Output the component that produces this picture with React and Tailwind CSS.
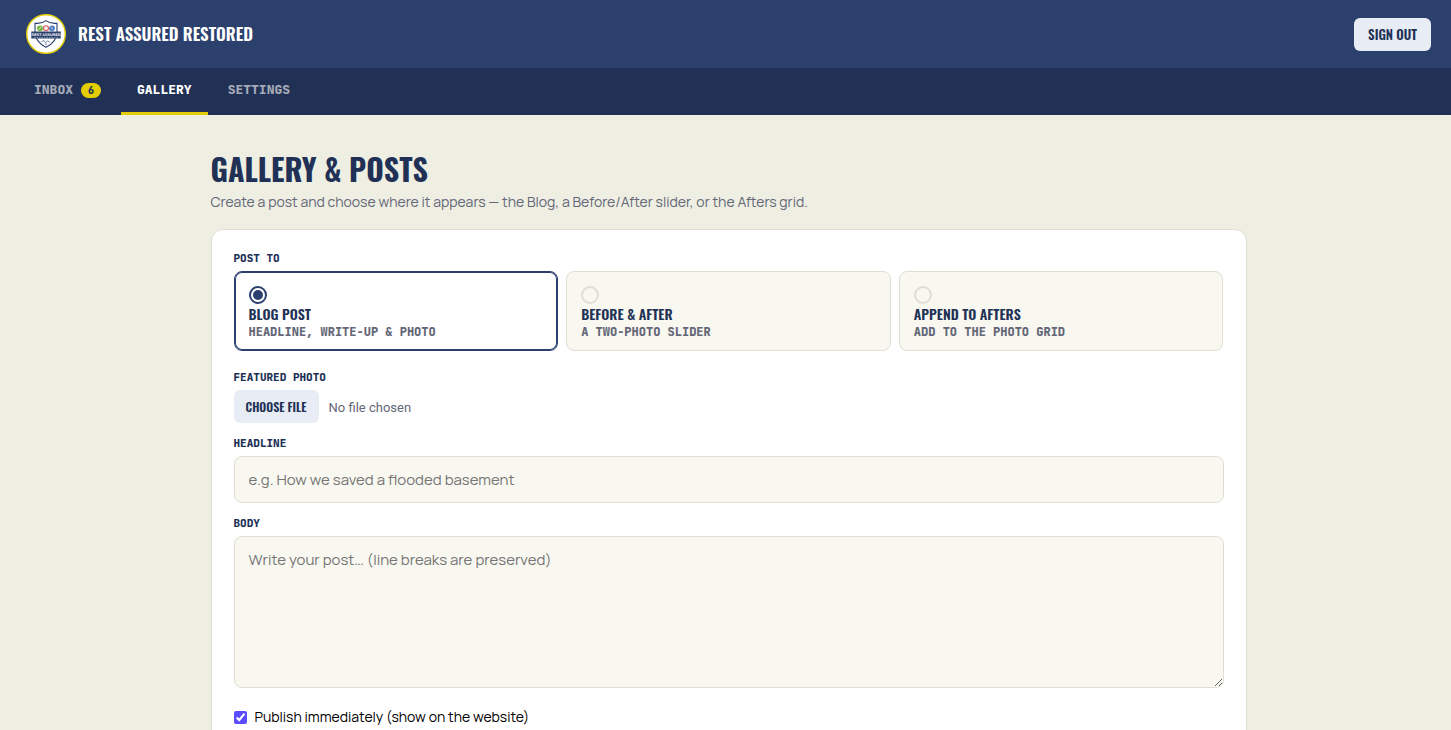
import { useState } from "react";

const TABS = [
    { id: "inbox", label: "Inbox", count: 6 },
    { id: "gallery", label: "Gallery" },
    { id: "settings", label: "Settings" },
];

const DESTINATIONS = [
    { id: "blog", title: "Blog Post", hint: "Headline, write-up & photo" },
    { id: "slider", title: "Before & After", hint: "A two-photo slider" },
    { id: "afters", title: "Append to Afters", hint: "Add to the photo grid" },
];

const DISPLAY = "font-['Oswald','Liberation_Sans_Narrow','Liberation_Sans',sans-serif]";
const MONO = "font-['JetBrains_Mono','DejaVu_Sans_Mono',monospace]";
const LABEL = `${MONO} block text-[11px] leading-[13px] font-extrabold uppercase text-[#213156]`;
const FIELD = "block w-full rounded-lg border border-[#deded2] bg-[#f9f8f0] px-3.5 py-[11px] text-[15px] leading-[23px] text-[#213156] placeholder:text-[#757575]";

/** Round shield badge shown next to the brand name */
function Logo() {
    return (
        <svg className="h-10 w-10 shrink-0" viewBox="0 0 40 40" aria-hidden="true">
            <circle cx="20" cy="20" r="19.3" fill="#fff" stroke="#e3cd00" strokeWidth="1.4" />
            <path
                d="M20 6.6c3.2 2.4 6.8 3.2 11 2.6v8.3c0 8.2-4.7 12.7-11 15.8-6.3-3.1-11-7.6-11-15.8V9.2c4.2.6 7.8-.2 11-2.6z"
                fill="#fff"
                stroke="#2c406e"
                strokeWidth="1.1"
            />
            <circle cx="14" cy="14.3" r="2.9" fill="#72b53c" />
            <circle cx="20" cy="14.3" r="2.5" fill="#fbe3e3" stroke="#d65a62" strokeWidth="1.1" />
            <circle cx="26" cy="14.3" r="2.9" fill="#4e7bbd" />
            <path d="M12.6 15.7l2.8-2.8M24.7 13l2.6 2.6M18.8 14.3h2.4" stroke="#fff" strokeWidth=".8" />
            <path d="M5.3 17.5h29.4v7H5.3z" fill="#2c406e" />
            <text
                x="20"
                y="22"
                textAnchor="middle"
                fontSize="3.7"
                fontWeight="700"
                fill="#fff"
                fontFamily="'Liberation Sans', sans-serif"
                textRendering="geometricPrecision"
            >
                REST ASSURED
            </text>
            <path d="M8 23.6h24" stroke="#a9b6d0" strokeWidth=".7" strokeDasharray="1.5 1" />
            <path d="M15.5 27.8l2.5-1.3 1.5 2.3 2-2 2.3 1.5M20 29v2" fill="none" stroke="#6c7ea5" strokeWidth=".9" />
        </svg>
    );
}

function DestinationCard({ option, checked, onSelect }) {
    return (
        <label
            className={`block cursor-pointer rounded-lg border px-3.5 pt-3.5 pb-2.5 ${checked
                ? "border-[#2c406e] bg-white shadow-[inset_0_0_0_1px_#2c406e]"
                : "border-[#deded2] bg-[#f9f8f0]"
                }`}
        >
            <input
                type="radio"
                name="destination"
                value={option.id}
                checked={checked}
                onChange={() => onSelect(option.id)}
                className="block h-[18px] w-[18px] appearance-none rounded-full border-2 border-[#deded2] bg-clip-content p-0.5
                         checked:border-[#2c406e] checked:bg-[#2c406e]"
            />
            <span className={`${DISPLAY} block text-sm leading-5 font-semibold uppercase text-[#213156]`}>
                {option.title}
            </span>
            <span className={`${MONO} block text-xs leading-4 font-extrabold uppercase text-[#646777]`}>
                {option.hint}
            </span>
        </label>
    );
}

export default function App() {
    const [tab, setTab] = useState("gallery");
    const [destination, setDestination] = useState("blog");
    const [published, setPublished] = useState(true);

    return (
        <div className="h-screen overflow-y-auto bg-[#eeeee2] font-['Manrope','Inter',sans-serif] [scrollbar-width:none]">
            <header className="flex h-[68px] items-center justify-between bg-[#2c406e] pr-5 pl-[26px]">
                <div className="flex items-center gap-3">
                    <Logo />
                    <span className={`${DISPLAY} text-[17px] font-semibold uppercase text-white`}>Rest Assured Restored</span>
                </div>
                <button
                    type="button"
                    className={`${DISPLAY} rounded-md bg-[#e8ecf4] px-3.5 py-2 text-[13px] leading-[17px] font-semibold uppercase text-[#213156]`}
                >
                    Sign Out
                </button>
            </header>

            <nav className="flex h-[47px] gap-1 bg-[#213156] pl-[18px]">
                {TABS.map((item) => (
                    <button
                        key={item.id}
                        type="button"
                        onClick={() => setTab(item.id)}
                        className={`${MONO} flex items-center gap-2 border-b-3 px-4 text-[13px] font-extrabold uppercase ${tab === item.id
                            ? "border-[#e3cd00] text-white"
                            : "border-transparent text-[#a6abb8]"
                            }`}
                    >
                        {item.label}
                        {item.count && (
                            <span className="rounded-full bg-[#e3cd00] px-[7px] text-[10px] leading-[15px] text-[#213156]">
                                {item.count}
                            </span>
                        )}
                    </button>
                ))}
            </nav>

            <main className="pt-[34px] pr-5 pb-10 pl-[26px]">
                <div className="mx-auto max-w-[1036px]">
                    <h1 className={`${DISPLAY} mb-0.5 text-[30px] leading-10 font-bold uppercase text-[#213156]`}>
                        Gallery &amp; Posts
                    </h1>
                    <p className="mb-4 text-sm leading-[22px] text-[#646777]">
                        Create a post and choose where it appears — the Blog, a Before/After slider, or the Afters grid.
                    </p>

                    <form className="rounded-xl border border-[#deded2] bg-white p-[22px]">
                        <fieldset>
                            <legend className={`${LABEL} mb-1.5`}>Post to</legend>
                            <div className="grid grid-cols-3 gap-2">
                                {DESTINATIONS.map((option) => (
                                    <DestinationCard
                                        key={option.id}
                                        option={option}
                                        checked={destination === option.id}
                                        onSelect={setDestination}
                                    />
                                ))}
                            </div>
                        </fieldset>

                        <div className="mt-5 flex flex-col gap-3.5">
                            <div>
                                <label htmlFor="photo" className={`${LABEL} mb-1.5`}>Featured photo</label>
                                <input
                                    id="photo"
                                    type="file"
                                    accept="image/*"
                                    className="block w-full font-['Roboto',sans-serif] text-[13px] text-[#646777]
                                             file:mr-2.5 file:rounded-md file:bg-[#e8ecf4] file:px-3 file:py-2
                                             file:font-['Oswald','Liberation_Sans_Narrow','Liberation_Sans',sans-serif]
                                             file:text-[12px] file:leading-[17px] file:font-semibold file:uppercase file:text-[#213156]"
                                />
                            </div>

                            <div>
                                <label htmlFor="headline" className={`${LABEL} mb-1.5`}>Headline</label>
                                <input
                                    id="headline"
                                    type="text"
                                    placeholder="e.g. How we saved a flooded basement"
                                    className={FIELD}
                                />
                            </div>

                            <div>
                                <label htmlFor="body" className={`${LABEL} mb-1.5`}>Body</label>
                                <textarea
                                    id="body"
                                    placeholder="Write your post… (line breaks are preserved)"
                                    className={`${FIELD} h-[152px] resize-y`}
                                />
                            </div>

                            <label className="flex items-center gap-2 py-1 text-sm leading-[22px] text-black">
                                <input
                                    type="checkbox"
                                    checked={published}
                                    onChange={(e) => setPublished(e.target.checked)}
                                    className="h-[13px] w-[13px] accent-[#5b4dff]"
                                />
                                Publish immediately (show on the website)
                            </label>
                        </div>
                    </form>
                </div>
            </main>
        </div>
    );
}
